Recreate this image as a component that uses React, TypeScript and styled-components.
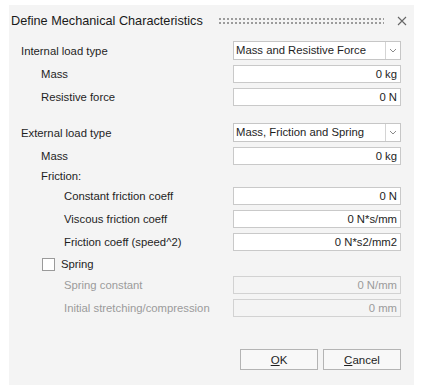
import React from 'react';
import styled, { createGlobalStyle } from 'styled-components';

const GlobalStyle = createGlobalStyle`
  body {
    margin: 0;
    background: #ffffff;
    font-family: 'Liberation Sans', Arial, sans-serif;
    color: #1e1e1e;
  }
`;

const Page = styled.div`
  padding: 5px 7px 6px 9px;
`;

const Dialog = styled.section`
  width: 405px;
  height: 380px;
  background: #f4f4f4;
  display: flex;
  flex-direction: column;
`;

const TitleBar = styled.header`
  height: 32px;
  display: flex;
  align-items: center;
  padding: 0 5px 0 2px;
  box-sizing: border-box;

  h1 {
    margin: 0;
    font-size: 12.7px;
    font-weight: normal;
    color: #1a1a1a;
    white-space: nowrap;
  }
`;

const Grip = styled.div`
  flex: 1;
  height: 8px;
  margin: 0 11px 0 15px;
  background-image: radial-gradient(circle, #9a9a9a 0.7px, transparent 1.1px);
  background-size: 4px 4px;
`;

const CloseButton = styled.button`
  width: 14px;
  height: 14px;
  padding: 0;
  border: none;
  background: none;
  display: flex;
  align-items: center;
  justify-content: center;
`;

const Form = styled.div`
  flex: 1;
  display: flex;
  flex-direction: column;
  padding: 4px 13px 15px 12px;
`;

const Row = styled.div<{ $indent?: number; $gap?: number; $height?: number }>`
  display: grid;
  grid-template-columns: 1fr 168px;
  align-items: center;
  height: ${(p) => p.$height ?? 18}px;
  margin-top: ${(p) => p.$gap ?? 5}px;
  padding-left: ${(p) => p.$indent ?? 0}px;
`;

const Label = styled.span<{ $disabled?: boolean }>`
  font-size: 11.3px;
  color: ${(p) => (p.$disabled ? '#9b9b9b' : '#1e1e1e')};
  white-space: nowrap;
`;

const Field = styled.div<{ $disabled?: boolean }>`
  height: 18px;
  box-sizing: border-box;
  border: 1px solid ${(p) => (p.$disabled ? '#d2d2d2' : '#c9c9c9')};
  background: ${(p) => (p.$disabled ? '#f4f4f4' : '#ffffff')};
  color: ${(p) => (p.$disabled ? '#9b9b9b' : '#1e1e1e')};
  font-size: 11.3px;
  line-height: 16px;
  text-align: right;
  padding-right: 3px;
`;

const Select = styled.div`
  height: 19px;
  box-sizing: border-box;
  border: 1px solid #c6c6c6;
  background: #ffffff;
  display: flex;
  font-size: 11.3px;
  line-height: 17px;

  span {
    flex: 1;
    padding-left: 2px;
    white-space: nowrap;
  }
`;

const SelectArrow = styled.div`
  width: 14px;
  border-left: 1px solid #d4d4d4;
  display: flex;
  align-items: center;
  justify-content: center;
`;

const CheckRow = styled.label`
  display: flex;
  align-items: center;
  gap: 6px;
  height: 14px;
  margin-top: 6px;
  padding-left: 21px;
  font-size: 11.3px;
`;

const CheckBox = styled.span`
  width: 13px;
  height: 13px;
  box-sizing: border-box;
  border: 1px solid #9a9a9a;
  background: #ffffff;
`;

const Spacer = styled.div<{ $size: number }>`
  height: ${(p) => p.$size}px;
`;

const Footer = styled.footer`
  margin-top: auto;
  display: flex;
  justify-content: flex-end;
  gap: 5px;
`;

const Button = styled.button`
  width: 78px;
  height: 21px;
  box-sizing: border-box;
  border: 1px solid #b4b4b4;
  background: #f8f8f8;
  font-family: 'Liberation Sans', Arial, sans-serif;
  font-size: 11.5px;
  color: #1e1e1e;
  padding: 0;

  u {
    text-underline-offset: 1px;
  }
`;

function Chevron() {
  return (
    <svg width="8" height="5" viewBox="0 0 8 5">
      <path d="M1 1 L4 4 L7 1" fill="none" stroke="#8a8a8a" strokeWidth="1" />
    </svg>
  );
}

function ValueRow({
  label,
  value,
  indent,
  disabled,
  gap,
}: {
  label: string;
  value: string;
  indent: number;
  disabled?: boolean;
  gap?: number;
}) {
  return (
    <Row $indent={indent} $gap={gap}>
      <Label $disabled={disabled}>{label}</Label>
      <Field $disabled={disabled}>{value}</Field>
    </Row>
  );
}

function SelectRow({ label, value, gap }: { label: string; value: string; gap?: number }) {
  return (
    <Row $gap={gap} $height={19}>
      <Label>{label}</Label>
      <Select>
        <span>{value}</span>
        <SelectArrow>
          <Chevron />
        </SelectArrow>
      </Select>
    </Row>
  );
}

export default function App() {
  return (
    <Page>
      <GlobalStyle />
      <Dialog>
        <TitleBar>
          <h1>Define Mechanical Characteristics</h1>
          <Grip />
          <CloseButton aria-label="Close">
            <svg width="10" height="10" viewBox="0 0 10 10">
              <path d="M1 1 L9 9 M9 1 L1 9" stroke="#666" strokeWidth="1.1" />
            </svg>
          </CloseButton>
        </TitleBar>
        <Form>
          <SelectRow label="Internal load type" value="Mass and Resistive Force" gap={0} />
          <ValueRow label="Mass" value="0 kg" indent={20} />
          <ValueRow label="Resistive force" value="0 N" indent={20} />
          <Spacer $size={12} />
          <SelectRow label="External load type" value="Mass, Friction and Spring" />
          <ValueRow label="Mass" value="0 kg" indent={20} />
          <Row $indent={20} $height={12}>
            <Label>Friction:</Label>
          </Row>
          <ValueRow label="Constant friction coeff" value="0 N" indent={43} />
          <ValueRow label="Viscous friction coeff" value="0 N*s/mm" indent={43} />
          <ValueRow label="Friction coeff (speed^2)" value="0 N*s2/mm2" indent={43} />
          <CheckRow>
            <CheckBox />
            Spring
          </CheckRow>
          <ValueRow label="Spring constant" value="0 N/mm" indent={43} disabled />
          <ValueRow label="Initial stretching/compression" value="0 mm" indent={43} disabled />
          <Footer>
            <Button>
              <u>O</u>K
            </Button>
            <Button>
              <u>C</u>ancel
            </Button>
          </Footer>
        </Form>
      </Dialog>
    </Page>
  );
}
